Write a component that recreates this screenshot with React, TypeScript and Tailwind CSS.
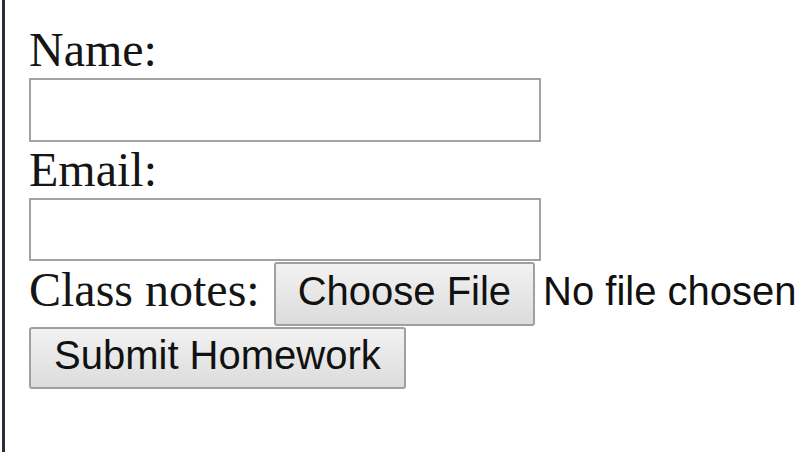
export default function App() {
  const btn =
    "border-[2px] border-[#a0a0a0] rounded-[3px] bg-gradient-to-b from-[#f2f2f2] to-[#dcdcdc] text-[40px] leading-[46px] text-[#111] font-['Liberation_Sans',Arial,sans-serif]";
  return (
    <div className="w-[800px] h-[456px] bg-white pl-[2px] overflow-hidden">
      <div className="h-[452px] border-l-[3px] border-[#2a2e38] pl-[24px] pt-[21px] flex flex-col items-start text-[#151515] font-['Liberation_Serif','Times_New_Roman',serif]">
        <label className="text-[48px] leading-[57px]">Name:</label>
        <input type="text" className="w-[512px] h-[64px] border-[2px] border-[#a3a3a3] bg-white outline-none" />
        <label className="text-[48px] leading-[56px]">Email:</label>
        <input type="email" className="w-[512px] h-[63px] border-[2px] border-[#a3a3a3] bg-white outline-none" />
        <div className="flex items-start mt-[1px]">
          <label className="text-[48px] leading-[56px] mr-[14px]">Class notes:</label>
          <button className={btn + " px-[22px] pt-[4px] pb-[10px]"}>Choose File</button>
          <span className="ml-[8px] pt-[6px] text-[40px] leading-[46px] text-[#111] font-['Liberation_Sans',Arial,sans-serif]">
            No file chosen
          </span>
        </div>
        <button className={btn + " mt-[1px] px-[23px] pt-[3px] pb-[9px]"}>Submit Homework</button>
      </div>
    </div>
  );
}
